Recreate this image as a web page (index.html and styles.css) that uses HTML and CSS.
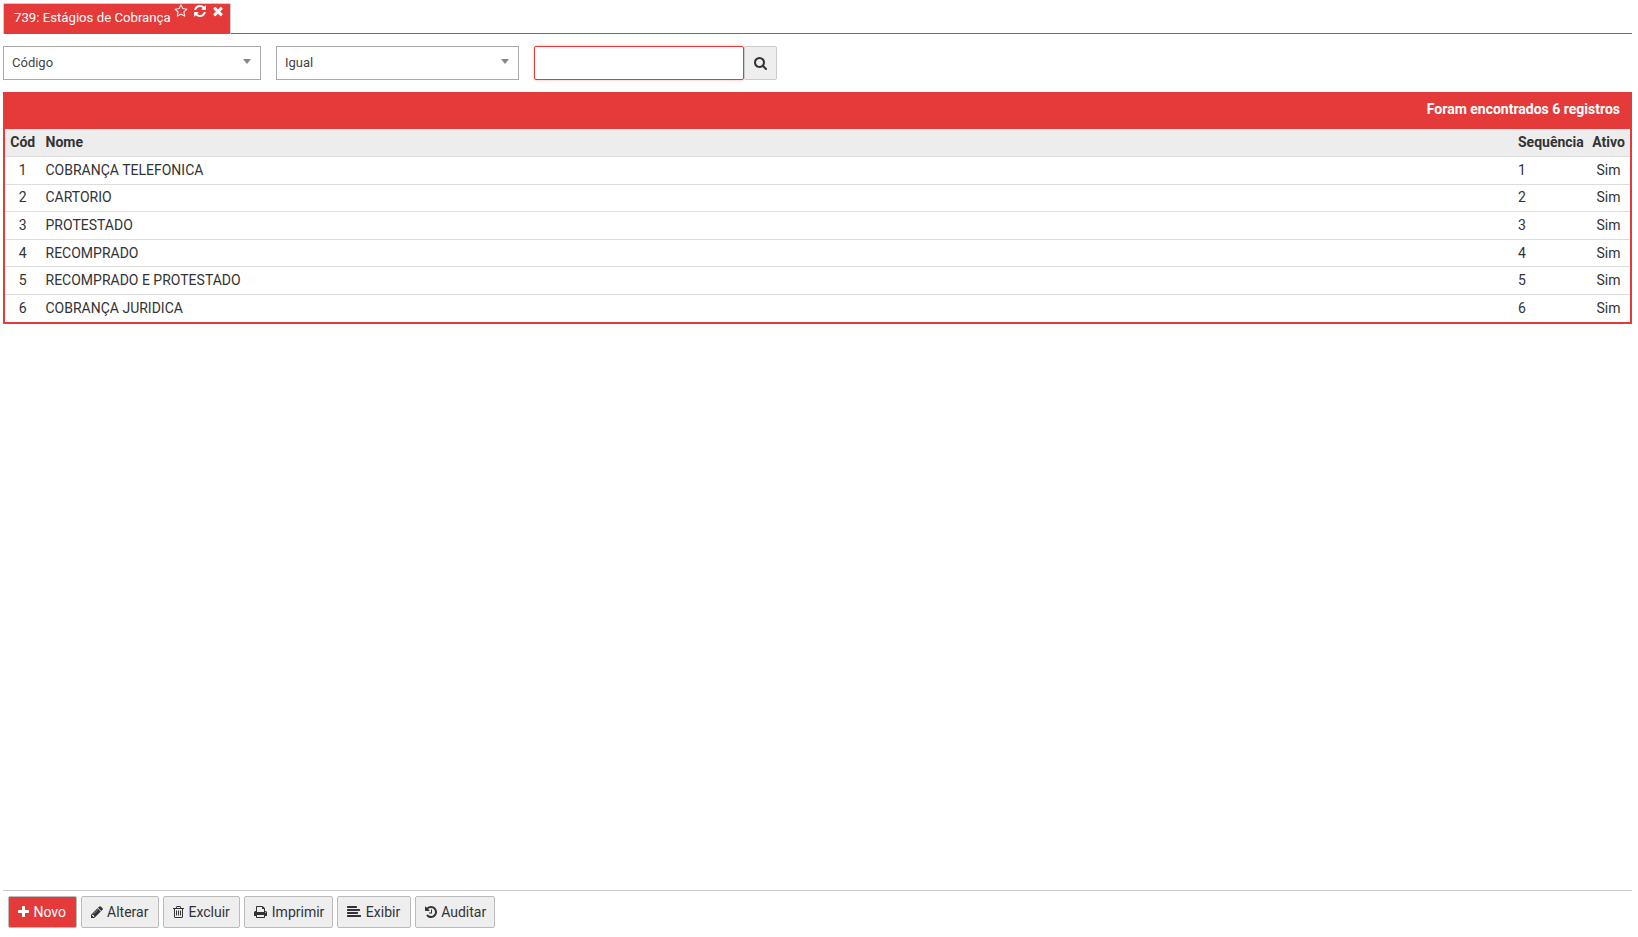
FILE: index.html
```html
<!DOCTYPE html>
<html lang="pt-BR">
<head>
<meta charset="utf-8">
<title>739: Estágios de Cobrança</title>
<link rel="stylesheet" href="styles.css">
</head>
<body>
<svg class="defs" xmlns="http://www.w3.org/2000/svg">
  <symbol id="i-star" viewBox="0 0 1792 1792"><path d="M1201 1004l306-297-422-62-189-382-189 382-422 62 306 297-73 421 378-199 377 199zm527-357q0 22-26 48l-363 354 86 500q1 7 1 20 0 50-41 50-19 0-40-12l-449-236-449 236q-22 12-40 12-21 0-31.5-14.5t-10.5-35.5q0-6 2-20l86-500-364-354q-25-27-25-48 0-37 56-46l502-73 225-455q19-41 49-41t49 41l225 455 502 73q56 9 56 46z"/></symbol>
  <symbol id="i-refresh" viewBox="0 0 1792 1792"><path d="M1639 1056q0 5-1 7-64 268-268 434.5t-478 166.5q-146 0-282.5-55t-243.5-157l-129 129q-19 19-45 19t-45-19-19-45v-448q0-26 19-45t45-19h448q26 0 45 19t19 45-19 45l-137 137q71 66 161 102t187 36q134 0 250-65t186-179q11-17 53-117 8-23 30-23h192q13 0 22.5 9.5t9.5 22.5zm25-800v448q0 26-19 45t-45 19h-448q-26 0-45-19t-19-45 19-45l138-138q-148-137-349-137-134 0-250 65t-186 179q-11 17-53 117-8 23-30 23h-199q-13 0-22.5-9.5t-9.5-22.5v-7q65-268 270-434.5t480-166.5q146 0 284 55.5t245 156.5l130-129q19-19 45-19t45 19 19 45z"/></symbol>
  <symbol id="i-times" viewBox="0 0 1792 1792"><path d="M1490 1322q0 40-28 68l-136 136q-28 28-68 28t-68-28l-294-294-294 294q-28 28-68 28t-68-28l-136-136q-28-28-28-68t28-68l294-294-294-294q-28-28-28-68t28-68l136-136q28-28 68-28t68 28l294 294 294-294q28-28 68-28t68 28l136 136q28 28 28 68t-28 68l-294 294 294 294q28 28 28 68z"/></symbol>
  <symbol id="i-search" viewBox="64 0 1664 1792"><path d="M1216 832q0-185-131.5-316.5t-316.5-131.5-316.5 131.5-131.5 316.5 131.5 316.5 316.5 131.5 316.5-131.5 131.5-316.5zm512 832q0 52-38 90t-90 38q-54 0-90-38l-343-342q-179 124-399 124-143 0-273.5-55.5t-225-150-150-225-55.5-273.5 55.5-273.5 150-225 225-150 273.5-55.5 273.5 55.5 225 150 150 225 55.5 273.5q0 220-124 399l343 343q37 37 37 90z"/></symbol>
  <symbol id="i-plus" viewBox="192 0 1408 1792"><path d="M1600 736v192q0 40-28 68t-68 28h-416v416q0 40-28 68t-68 28h-192q-40 0-68-28t-28-68v-416h-416q-40 0-68-28t-28-68v-192q0-40 28-68t68-28h416v-416q0-40 28-68t68-28h192q40 0 68 28t28 68v416h416q40 0 68 28t28 68z"/></symbol>
  <symbol id="i-pencil" viewBox="128 0 1536 1792"><path d="M491 1536l91-91-235-235-91 91v107h128v128h107zm523-928q0-22-22-22-10 0-17 7l-542 542q-7 7-7 17 0 22 22 22 10 0 17-7l542-542q7-7 7-17zm-54-192l416 416-832 832h-416v-416zm683 96q0 53-37 90l-166 166-416-416 166-165q36-38 90-38 53 0 91 38l235 234q37 39 37 91z"/></symbol>
  <symbol id="i-trash" viewBox="192 0 1408 1792"><path d="M704 736v576q0 14-9 23t-23 9h-64q-14 0-23-9t-9-23v-576q0-14 9-23t23-9h64q14 0 23 9t9 23zm256 0v576q0 14-9 23t-23 9h-64q-14 0-23-9t-9-23v-576q0-14 9-23t23-9h64q14 0 23 9t9 23zm256 0v576q0 14-9 23t-23 9h-64q-14 0-23-9t-9-23v-576q0-14 9-23t23-9h64q14 0 23 9t9 23zm128 724v-948h-896v948q0 22 7 40.5t14.5 27 10.5 8.5h832q3 0 10.5-8.5t14.5-27 7-40.5zm-672-1076h448l-48-117q-7-9-17-11h-317q-10 2-17 11zm928 32v64q0 14-9 23t-23 9h-96v948q0 83-47 143.5t-113 60.5h-832q-66 0-113-58.5t-47-141.5v-952h-96q-14 0-23-9t-9-23v-64q0-14 9-23t23-9h309l70-167q15-37 54-63t79-26h320q40 0 79 26t54 63l70 167h309q14 0 23 9t9 23z"/></symbol>
  <symbol id="i-print" viewBox="64 0 1664 1792"><path d="M448 1536h896v-256h-896v256zm0-640h896v-384h-160q-40 0-68-28t-28-68v-160h-640v640zm1152 64q0-26-19-45t-45-19-45 19-19 45 19 45 45 19 45-19 19-45zm128 0v416q0 13-9.5 22.5t-22.5 9.5h-224v160q0 40-28 68t-68 28h-960q-40 0-68-28t-28-68v-160h-224q-13 0-22.5-9.5t-9.5-22.5v-416q0-79 56.5-135.5t135.5-56.5h64v-544q0-40 28-68t68-28h672q40 0 88 20t76 48l152 152q28 28 48 76t20 88v256h64q79 0 135.5 56.5t56.5 135.5z"/></symbol>
  <symbol id="i-align" viewBox="0 0 1792 1792"><path d="M1792 1344v128q0 26-19 45t-45 19h-1664q-26 0-45-19t-19-45v-128q0-26 19-45t45-19h1664q26 0 45 19t19 45zm-384-384v128q0 26-19 45t-45 19h-1280q-26 0-45-19t-19-45v-128q0-26 19-45t45-19h1280q26 0 45 19t19 45zm256-384v128q0 26-19 45t-45 19h-1536q-26 0-45-19t-19-45v-128q0-26 19-45t45-19h1536q26 0 45 19t19 45zm-384-384v128q0 26-19 45t-45 19h-1152q-26 0-45-19t-19-45v-128q0-26 19-45t45-19h1152q26 0 45 19t19 45z"/></symbol>
  <symbol id="i-history" viewBox="128 0 1536 1792"><path d="M1664 896q0 156-61 298t-164 245-245 164-298 61q-172 0-327-72.5t-264-204.5q-7-10-6.5-22.5t8.5-20.5l137-138q10-9 25-9 16 2 23 12 73 95 179 147t225 52q104 0 198.5-40.5t163.5-109.5 109.5-163.5 40.5-198.5-40.5-198.5-109.5-163.5-163.5-109.5-198.5-40.5q-98 0-188 35.5t-160 101.5l137 138q31 30 14 69-17 40-59 40h-448q-26 0-45-19t-19-45v-448q0-42 40-59 39-17 69 14l130 129q107-101 244.5-156.5t284.5-55.5q156 0 298 61t245 164 164 245 61 298zm-640-288v448q0 14-9 23t-23 9h-320q-14 0-23-9t-9-23v-64q0-14 9-23t23-9h224v-352q0-14 9-23t23-9h64q14 0 23 9t9 23z"/></symbol>
</svg>

<div class="page">
  <nav class="tabs">
    <div class="tab">
      <span class="tab-title">739: Estágios de Cobrança</span>
      <span class="tab-icons">
        <svg class="ti"><use href="#i-star"/></svg>
        <svg class="ti"><use href="#i-refresh"/></svg>
        <svg class="ti"><use href="#i-times"/></svg>
      </span>
    </div>
  </nav>

  <form class="filters">
    <div class="select select-field"><span>Código</span><i class="caret"></i></div>
    <div class="select select-op"><span>Igual</span><i class="caret"></i></div>
    <div class="search-group">
      <input class="search-input" type="text" aria-label="Busca">
      <button class="search-btn" type="button" aria-label="Buscar"><svg class="icon w13"><use href="#i-search"/></svg></button>
    </div>
  </form>

  <section class="panel">
    <header class="panel-head">Foram encontrados 6 registros</header>
    <table class="grid">
      <thead>
        <tr><th class="c-cod">Cód</th><th class="c-nome">Nome</th><th class="c-seq">Sequência</th><th class="c-ativo">Ativo</th></tr>
      </thead>
      <tbody>
        <tr><td class="c-cod">1</td><td class="c-nome">COBRANÇA TELEFONICA</td><td class="c-seq">1</td><td class="c-ativo">Sim</td></tr>
        <tr><td class="c-cod">2</td><td class="c-nome">CARTORIO</td><td class="c-seq">2</td><td class="c-ativo">Sim</td></tr>
        <tr><td class="c-cod">3</td><td class="c-nome">PROTESTADO</td><td class="c-seq">3</td><td class="c-ativo">Sim</td></tr>
        <tr><td class="c-cod">4</td><td class="c-nome">RECOMPRADO</td><td class="c-seq">4</td><td class="c-ativo">Sim</td></tr>
        <tr><td class="c-cod">5</td><td class="c-nome">RECOMPRADO E PROTESTADO</td><td class="c-seq">5</td><td class="c-ativo">Sim</td></tr>
        <tr><td class="c-cod">6</td><td class="c-nome">COBRANÇA JURIDICA</td><td class="c-seq">6</td><td class="c-ativo">Sim</td></tr>
      </tbody>
    </table>
  </section>

  <footer class="actions">
    <button class="btn btn-primary" type="button"><svg class="icon w11"><use href="#i-plus"/></svg>Novo</button>
    <button class="btn" type="button"><svg class="icon w12"><use href="#i-pencil"/></svg>Alterar</button>
    <button class="btn" type="button"><svg class="icon w11"><use href="#i-trash"/></svg>Excluir</button>
    <button class="btn btn-tight" type="button"><svg class="icon w13"><use href="#i-print"/></svg>Imprimir</button>
    <button class="btn" type="button"><svg class="icon w14"><use href="#i-align"/></svg>Exibir</button>
    <button class="btn btn-tight" type="button"><svg class="icon w12"><use href="#i-history"/></svg>Auditar</button>
  </footer>
</div>
</body>
</html>
```

FILE: styles.css
```css
* { box-sizing: border-box; }
html, body { margin: 0; height: 100%; background: #fff; }
body { font-family: Roboto, "Liberation Sans", sans-serif; font-size: 14px; line-height: 20px; color: #333; overflow: hidden; }
.defs { position: absolute; width: 0; height: 0; }

.page { height: 937px; padding: 3px 6px 0 3px; display: flex; flex-direction: column; }

.tabs { height: 31px; border-bottom: 1px solid #e53a3a; display: flex; flex: none; }
.tab { width: 228px; height: 31px; background: #e53a3a; color: #fff; border: 1px solid #ccc; border-bottom: 0; border-radius: 2px 2px 0 0; padding: 0 0 0 10px; display: flex; }
.tab-title { padding-top: 4px; line-height: 20px; font-size: 13.2px; white-space: nowrap; }
.tab-icons { display: flex; gap: 4.5px; margin-left: 3.5px; }
.ti { width: 14px; height: 14px; fill: #fff; }

.filters { display: flex; margin-top: 12px; height: 34px; flex: none; }
.select { height: 34px; border: 1px solid #aaa; background: #fff; color: #444; font-size: 13px; display: flex; align-items: center; justify-content: space-between; padding: 0 9px 0 8px; }
.select-field { width: 258px; }
.select-op { width: 243px; margin-left: 15px; }
.caret { width: 0; height: 0; border: 4px solid transparent; border-top: 5px solid #888; border-bottom: 0; margin-top: -3px; }
.search-group { display: flex; margin-left: 15px; }
.search-input { width: 210px; height: 34px; border: 1px solid #e53a3a; border-radius: 2px; outline: 0; box-shadow: 0 0 3px rgba(229, 58, 58, .4); background: #fff; padding: 0 8px; font: inherit; }
.search-btn { width: 33px; height: 34px; border: 1px solid #ccc; border-radius: 2px; background: #eee; color: #333; padding: 0; display: flex; align-items: center; justify-content: center; }

.panel { margin-top: 12px; border: 2px solid #e53a3a; border-top: 0; flex: none; }
.panel-head { height: 37px; margin: 0 -2px; background: #e53a3a; color: #fff; font-weight: 700; text-align: right; padding: 7px 12px 0 0; }

.grid { width: 100%; border-collapse: separate; border-spacing: 0; table-layout: fixed; }
.grid th { background: #ededed; height: 28px; font-weight: 700; padding: 0 5px 1px; border-bottom: 1px solid #ddd; text-align: left; color: #333; }
.grid td { padding: 2.8px 5px 3.8px; border-bottom: 1px solid #ddd; vertical-align: middle; }
.grid tr:last-child td { border-bottom: 0; }
.c-cod { width: 35.5px; }
.grid .c-cod { text-align: center; }
.c-seq { width: 74px; }
.c-ativo { width: 43px; }
.grid .c-ativo { text-align: center; }

.actions { margin-top: auto; height: 47px; border-top: 1px solid #ccc; padding: 5px 0 0 5px; display: flex; gap: 4px; flex: none; }
.btn { height: 32px; padding: 0 9.5px 0 9px; border: 1px solid #bbb; border-radius: 2px; background: #eee; color: #333; font: inherit; display: flex; align-items: center; gap: 4.5px; }
.btn-tight { padding-right: 8px; }
.btn-primary { background: #e53a3a; color: #fff; }
.icon { height: 14px; fill: currentColor; flex: none; }
.w11 { width: 11px; }
.w12 { width: 12px; }
.w13 { width: 13px; }
.w14 { width: 14px; }
```
